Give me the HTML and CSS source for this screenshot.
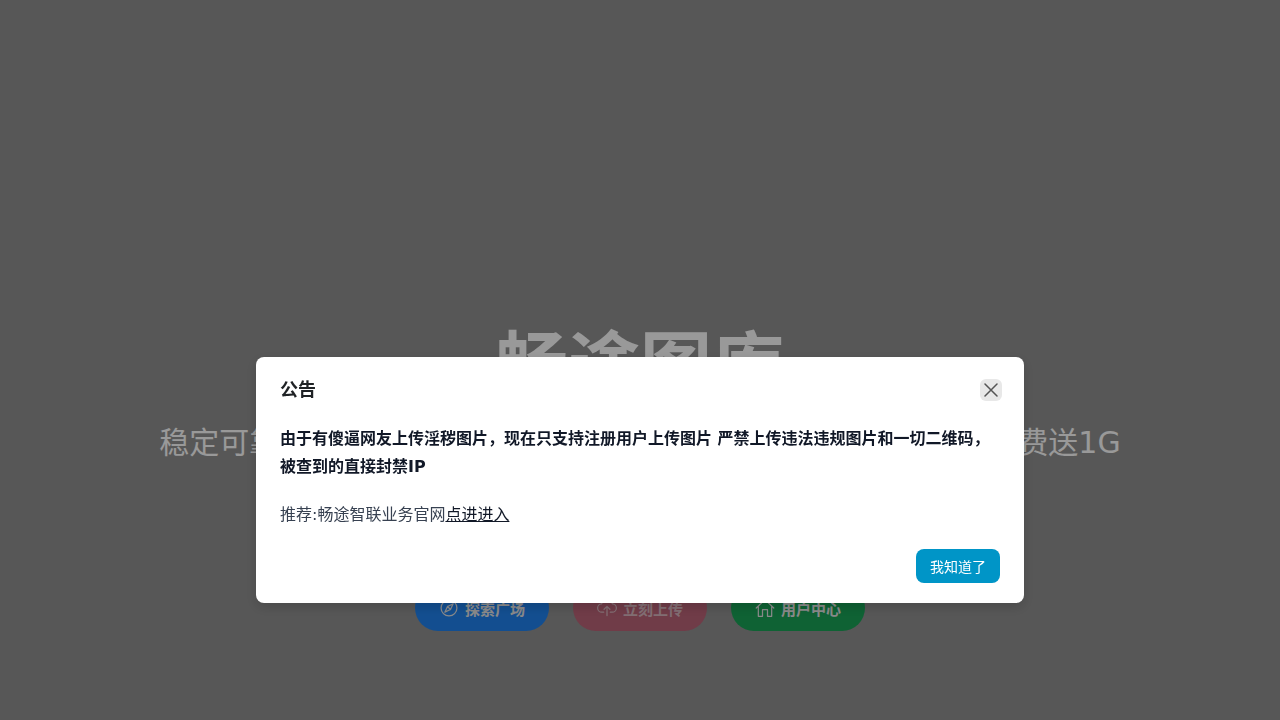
FILE: index.html
```html
<!DOCTYPE html>
<html lang="zh-CN">
<head>
    <meta charset="UTF-8">
    <meta name="viewport" content="width=device-width, initial-scale=1.0">
    <title>畅途图库</title>
    <link rel="stylesheet" href="styles.css">
</head>
<body>
    <main class="hero">
        <h1>畅途图库</h1>
        <p class="slogan">稳定可靠的高速图床服务 全球加速且不限流量 新用户注册即可免费送1G</p>
        <nav class="links">
            <a class="link blue" href="#explore">
                <svg viewBox="0 0 24 24"><circle cx="12" cy="12" r="9.5"/><path d="M17 7l-3.2 6.8L7 17l3.2-6.8zM10.2 10.2l3.6 3.6"/></svg>
                探索广场
            </a>
            <a class="link red" href="#upload">
                <svg viewBox="0 0 24 24"><path d="M8 17H6a5 5 0 0 1-.5-10A7 7 0 0 1 18.500 7 5 5 0 0 1 18 17h-2M12 21V10M8.500 13.500L12 10l3.500 3.500"/></svg>
                立刻上传
            </a>
            <a class="link green" href="#user">
                <svg viewBox="0 0 24 24"><path d="M1.500 12L12 2l10.500 10M4 10v12h5v-8h6v8h5V10"/></svg>
                用户中心
            </a>
        </nav>
    </main>

    <div class="overlay">
        <section class="modal" role="dialog" aria-labelledby="notice-title">
            <header class="modal-header">
                <h2 id="notice-title">公告</h2>
                <button class="close" type="button" aria-label="关闭">
                    <svg viewBox="0 0 14 14"><path d="M1 1l12 12M13 1L1 13"/></svg>
                </button>
            </header>
            <div class="modal-body">
                <p><strong>由于有傻逼网友上传淫秽图片，现在只支持注册用户上传图片 严禁上传违法违规图片和一切二维码，被查到的直接封禁IP</strong></p>
                <p>推荐:畅途智联业务官网<a href="#site">点进进入</a></p>
            </div>
            <footer class="modal-footer">
                <button class="confirm" type="button">我知道了</button>
            </footer>
        </section>
    </div>

    <script>
        document.querySelectorAll('.close, .confirm').forEach(function(button) {
            button.addEventListener('click', function() {
                document.querySelector('.overlay').remove();
            });
        });
    </script>
</body>
</html>
```
FILE: styles.css
```css
* {
    box-sizing: border-box;
}
body {
    font-family: "DejaVu Sans", "Noto Sans CJK SC", sans-serif;
    margin: 0;
    background-color: #919191;
}
h1, h2, p {
    margin: 0;
}
button {
    font-family: inherit;
    border: none;
    cursor: pointer;
}
svg {
    fill: none;
    stroke: currentColor;
    stroke-width: 1.5;
    stroke-linecap: round;
    stroke-linejoin: round;
}
.hero {
    min-height: 100vh;
    padding-top: 324px;
    color: #fff;
    text-align: center;
}
.hero h1 {
    font-size: 72px;
    line-height: 84px;
}
.slogan {
    margin-top: 17px;
    font-size: 30px;
    line-height: 36px;
}
.links {
    display: flex;
    justify-content: center;
    gap: 24px;
    margin-top: 124px;
}
.link {
    display: flex;
    align-items: center;
    gap: 6px;
    height: 46px;
    padding: 0 24px;
    border-radius: 24px;
    color: #e6e6e6;
    font-size: 15px;
    font-weight: bold;
    text-decoration: none;
}
.link svg {
    width: 20px;
    height: 20px;
}
.blue {
    background-color: #2083f0;
}
.red {
    background-color: #bb6478;
    color: #d9b8c0;
}
.green {
    background-color: #19a357;
}
.overlay {
    position: fixed;
    inset: 0;
    padding-top: 357px;
    background-color: rgba(0, 0, 0, 0.4);
}
.modal {
    width: 60%;
    margin: 0 auto;
    padding: 20px 24px;
    border-radius: 8px;
    background-color: #fff;
    box-shadow: 0 4px 12px rgba(0, 0, 0, 0.15);
}
.modal-header {
    display: flex;
    justify-content: space-between;
    align-items: center;
    margin-right: -2px;
}
.modal-header h2 {
    color: #1f2225;
    font-size: 18px;
    line-height: 26px;
}
.close {
    display: flex;
    align-items: center;
    justify-content: center;
    width: 22px;
    height: 22px;
    padding: 0;
    border-radius: 6px;
    background-color: #e8e8e8;
    color: #555;
}
.close svg {
    width: 14px;
    height: 14px;
}
.modal-body {
    padding: 22px 0 20px;
    color: #374151;
    font-size: 16px;
    line-height: 28px;
}
.modal-body p + p {
    margin-top: 20px;
}
.modal-body strong,
.modal-body a {
    color: #111827;
}
.modal-footer {
    display: flex;
    justify-content: flex-end;
}
.confirm {
    height: 34px;
    padding: 0 14px;
    border-radius: 8px;
    background-color: #0095c7;
    color: #fff;
    font-size: 14px;
}
```
